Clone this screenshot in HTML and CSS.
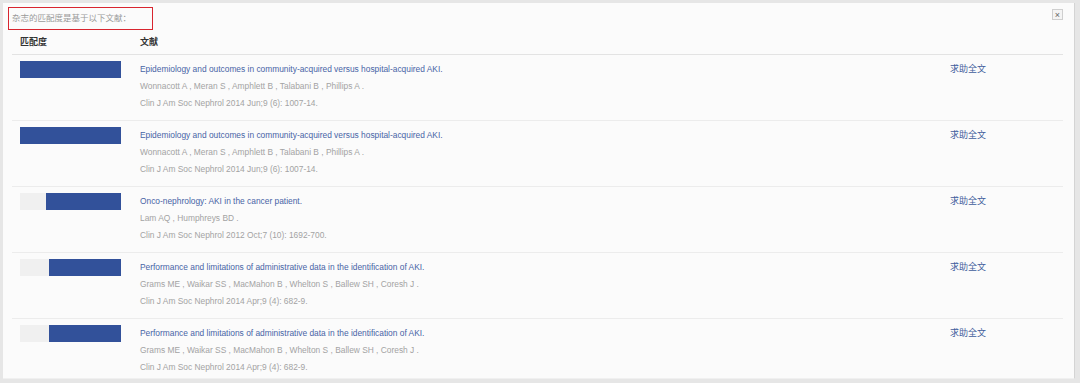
FILE: index.html
```html
<!DOCTYPE html>
<html lang="zh">
  <head>
    <meta charset="UTF-8" />
    <meta name="viewport" content="width=device-width, initial-scale=1.0" />
    <title>匹配文献</title>
    <link rel="stylesheet" href="styles.css">
  </head>
  <body>
    <div class="panel">
      <div class="panel-top">
        <div class="notice">杂志的匹配度是基于以下文献：</div>
        <button class="close-btn" type="button">&times;</button>
      </div>

      <div class="ref-table">
        <div class="ref-head">
          <div class="col-score">匹配度</div>
          <div class="col-ref">文献</div>
        </div>

        <div class="ref-row">
          <div class="col-score">
            <div class="score-track"><div class="score-fill" style="width: 100%"></div></div>
          </div>
          <div class="col-ref">
            <a class="ref-title" href="#">Epidemiology and outcomes in community-acquired versus hospital-acquired AKI.</a>
            <div class="ref-meta">Wonnacott A , Meran S , Amphlett B , Talabani B , Phillips A .</div>
            <div class="ref-meta">Clin J Am Soc Nephrol 2014 Jun;9 (6): 1007-14.</div>
          </div>
          <div class="col-action"><a href="#">求助全文</a></div>
        </div>

        <div class="ref-row">
          <div class="col-score">
            <div class="score-track"><div class="score-fill" style="width: 100%"></div></div>
          </div>
          <div class="col-ref">
            <a class="ref-title" href="#">Epidemiology and outcomes in community-acquired versus hospital-acquired AKI.</a>
            <div class="ref-meta">Wonnacott A , Meran S , Amphlett B , Talabani B , Phillips A .</div>
            <div class="ref-meta">Clin J Am Soc Nephrol 2014 Jun;9 (6): 1007-14.</div>
          </div>
          <div class="col-action"><a href="#">求助全文</a></div>
        </div>

        <div class="ref-row">
          <div class="col-score">
            <div class="score-track"><div class="score-fill" style="width: 74%"></div></div>
          </div>
          <div class="col-ref">
            <a class="ref-title" href="#">Onco-nephrology: AKI in the cancer patient.</a>
            <div class="ref-meta">Lam AQ , Humphreys BD .</div>
            <div class="ref-meta">Clin J Am Soc Nephrol 2012 Oct;7 (10): 1692-700.</div>
          </div>
          <div class="col-action"><a href="#">求助全文</a></div>
        </div>

        <div class="ref-row">
          <div class="col-score">
            <div class="score-track"><div class="score-fill" style="width: 71%"></div></div>
          </div>
          <div class="col-ref">
            <a class="ref-title" href="#">Performance and limitations of administrative data in the identification of AKI.</a>
            <div class="ref-meta">Grams ME , Waikar SS , MacMahon B , Whelton S , Ballew SH , Coresh J .</div>
            <div class="ref-meta">Clin J Am Soc Nephrol 2014 Apr;9 (4): 682-9.</div>
          </div>
          <div class="col-action"><a href="#">求助全文</a></div>
        </div>

        <div class="ref-row">
          <div class="col-score">
            <div class="score-track"><div class="score-fill" style="width: 71%"></div></div>
          </div>
          <div class="col-ref">
            <a class="ref-title" href="#">Performance and limitations of administrative data in the identification of AKI.</a>
            <div class="ref-meta">Grams ME , Waikar SS , MacMahon B , Whelton S , Ballew SH , Coresh J .</div>
            <div class="ref-meta">Clin J Am Soc Nephrol 2014 Apr;9 (4): 682-9.</div>
          </div>
          <div class="col-action"><a href="#">求助全文</a></div>
        </div>
      </div>
    </div>
  </body>
</html>
```

FILE: styles.css
```css
html,
body {
  height: 100%;
}

body {
  margin: 0;
  padding: 3px 5px 4px 3px;
  box-sizing: border-box;
  background-color: #e6e6e6;
  font-family: "Liberation Sans", Arial, "Noto Sans CJK SC", sans-serif;
  font-size: 9px;
  color: #333;
  overflow: hidden;
}

.panel {
  height: 100%;
  box-sizing: border-box;
  background-color: #fbfbfb;
  border-right: 1px solid #d4d4d4;
  border-bottom: 1px solid #f0f0f0;
  padding: 4px 8px 0 5px;
}

.panel-top {
  display: flex;
  justify-content: space-between;
  align-items: flex-start;
}

.notice {
  border: 1px solid #d8252f;
  padding: 0 21px 0 3px;
  height: 21px;
  line-height: 21px;
  font-size: 8.5px;
  color: #9a9a9a;
}

.close-btn {
  margin: 2px 3px 0 0;
  width: 11px;
  height: 11px;
  padding: 0;
  border: 1px solid #cfcfcf;
  background-color: #f4f4f4;
  color: #666;
  font-size: 9px;
  line-height: 8px;
  font-family: "Liberation Sans", Arial, sans-serif;
}

.ref-table {
  margin: 1px 3px 0 4px;
}

.ref-head,
.ref-row {
  display: flex;
}

.ref-head {
  padding: 3px 0 3px;
  line-height: 17px;
  font-weight: bold;
  color: #333;
  border-bottom: 1px solid #e3e3e3;
}

.ref-row {
  padding: 6px 0 8px;
  line-height: 17px;
  border-bottom: 1px solid #ececec;
}

.ref-row:last-child {
  border-bottom: none;
}

.col-score {
  width: 128px;
  flex-shrink: 0;
  padding-left: 8px;
  box-sizing: border-box;
}

.col-ref {
  width: 810px;
  flex-shrink: 0;
  font-size: 8.4px;
}

.col-action a {
  color: #3f5d9c;
  text-decoration: none;
}

.score-track {
  width: 101px;
  height: 17px;
  background-color: #f0f0f0;
  display: flex;
  justify-content: flex-end;
}

.score-fill {
  height: 100%;
  background-color: #32519a;
}

.ref-title {
  display: block;
  color: #4864a6;
  text-decoration: none;
}

.ref-meta {
  color: #a3a3a3;
}

.ref-head .col-ref {
  font-size: 9px;
}
```
